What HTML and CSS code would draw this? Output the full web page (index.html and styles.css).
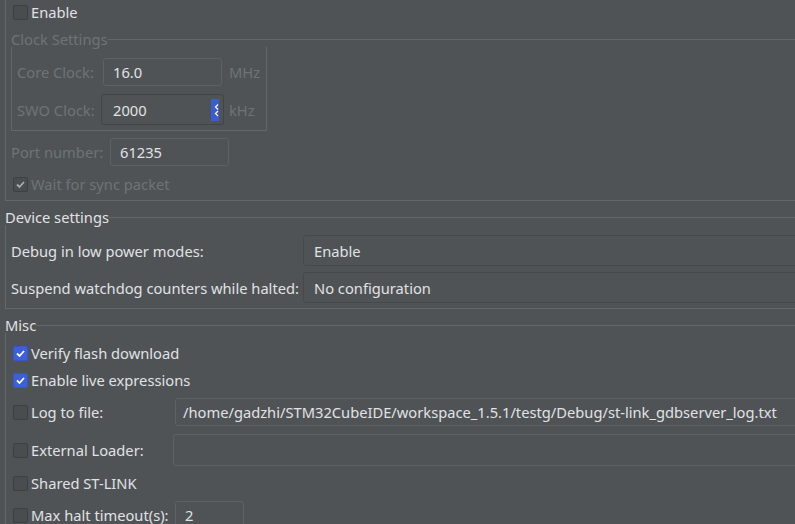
FILE: index.html
```html
<!DOCTYPE html>
<html>
<head>
  <meta charset="UTF-8">
  <link rel="stylesheet" href="styles.css">
</head>
<body>
  <div class="page">
    <div class="outer">
      <label class="check-row enable-row">
        <span class="checkbox"></span>
        <span>Enable</span>
      </label>

      <div class="group-title disabled">
        <span>Clock Settings</span>
        <span class="title-line"></span>
      </div>
      <div class="clock-box">
        <span class="disabled">Core Clock:</span>
        <div class="field">16.0</div>
        <span class="unit disabled">MHz</span>

        <span class="disabled">SWO Clock:</span>
        <div class="field spinner">
          <span>2000</span>
          <span class="spin-btn">
            <svg width="8" height="22" viewBox="0 0 8 22">
              <path d="M7 5.5 L4.5 8 L7 10.5 M7 12 L4.5 14.5 L7 17" fill="none" stroke="#fff" stroke-width="1.2"/>
            </svg>
          </span>
        </div>
        <span class="unit disabled">kHz</span>
      </div>

      <div class="port-row">
        <span class="disabled">Port number:</span>
        <div class="field port-field">61235</div>
      </div>

      <label class="check-row sync-row disabled">
        <span class="checkbox">
          <svg width="13" height="13" viewBox="0 0 13 13">
            <path d="M3 6.5 L5.5 9 L10 4" fill="none" stroke="#a7abae" stroke-width="1.8"/>
          </svg>
        </span>
        <span>Wait for sync packet</span>
      </label>
    </div>

    <div class="group-title section-title">
      <span>Device settings</span>
      <span class="title-line"></span>
    </div>
    <div class="device-box">
      <span>Debug in low power modes:</span>
      <div class="combo">Enable</div>
      <span>Suspend watchdog counters while halted:</span>
      <div class="combo">No configuration</div>
    </div>

    <div class="group-title section-title">
      <span>Misc</span>
      <span class="title-line"></span>
    </div>
    <div class="misc-box">
      <label class="check-row">
        <span class="checkbox checked">
          <svg width="13" height="13" viewBox="0 0 13 13">
            <path d="M3 6.5 L5.5 9 L10 4" fill="none" stroke="#fff" stroke-width="1.8"/>
          </svg>
        </span>
        <span>Verify flash download</span>
      </label>
      <label class="check-row misc-live">
        <span class="checkbox checked">
          <svg width="13" height="13" viewBox="0 0 13 13">
            <path d="M3 6.5 L5.5 9 L10 4" fill="none" stroke="#fff" stroke-width="1.8"/>
          </svg>
        </span>
        <span>Enable live expressions</span>
      </label>

      <div class="misc-row misc-log">
        <label class="check-row">
          <span class="checkbox"></span>
          <span>Log to file:</span>
        </label>
        <div class="field wide-field">/home/gadzhi/STM32CubeIDE/workspace_1.5.1/testg/Debug/st-link_gdbserver_log.txt</div>
      </div>

      <div class="misc-row misc-ext">
        <label class="check-row">
          <span class="checkbox"></span>
          <span>External Loader:</span>
        </label>
        <div class="field loader-field"></div>
      </div>

      <label class="check-row misc-shared">
        <span class="checkbox"></span>
        <span>Shared ST-LINK</span>
      </label>

      <div class="misc-row misc-halt">
        <label class="check-row">
          <span class="checkbox"></span>
          <span>Max halt timeout(s):</span>
        </label>
        <div class="field halt-field">2</div>
      </div>
    </div>
  </div>
</body>
</html>
```

FILE: styles.css
```css
body {
  margin: 0;
  height: 524px;
  overflow: hidden;
  background-color: #4f5356;
  font-family: "Noto Sans", sans-serif;
  font-size: 14.7px;
  color: #e0e2e4;
}

.page {
  height: 524px;
  padding-left: 5px;
  overflow: hidden;
}

.disabled {
  color: #6e7377;
}

/* outer group, continues above the window */
.outer {
  height: 201px;
  box-sizing: border-box;
  padding-left: 5px;
  border-left: 1px solid #62676b;
  border-bottom: 1px solid #62676b;
}

.check-row {
  display: flex;
  align-items: center;
  height: 24px;
  cursor: default;
}

.enable-row {
  margin-left: 2px;
}

.checkbox {
  display: flex;
  align-items: center;
  justify-content: center;
  width: 15px;
  height: 15px;
  box-sizing: border-box;
  margin-right: 3px;
  flex-shrink: 0;
  background-color: #494d50;
  border: 1px solid #3d4043;
  border-radius: 2px;
}

.checkbox.checked {
  background-color: #3d5fd8;
  border-color: #3657c9;
}

.group-title {
  display: flex;
  align-items: center;
  height: 16px;
  line-height: 16px;
  margin-top: 7px;
}

.title-line {
  flex: 1;
  height: 0;
  margin-top: 1px;
  border-top: 1px solid #62676b;
}

.clock-box {
  display: grid;
  grid-template-columns: 86px 119px auto;
  row-gap: 8px;
  align-items: center;
  width: 256px;
  box-sizing: border-box;
  padding: 11px 0 5px 5px;
  border: 1px solid #62676b;
  border-top: none;
}

.field {
  display: flex;
  align-items: center;
  height: 28px;
  box-sizing: border-box;
  padding-left: 9px;
  border: 1px solid #5d6165;
  border-radius: 3px;
  white-space: nowrap;
  overflow: hidden;
}

.spinner {
  height: 31px;
  margin: 0 -2px;
  padding-left: 11px;
  padding-right: 4px;
  justify-content: space-between;
  border-color: #414548;
}

.spin-btn {
  display: flex;
  width: 8px;
  height: 22px;
  background-color: #3b5cd9;
}

.unit {
  padding-left: 7px;
}

.port-row {
  display: grid;
  grid-template-columns: 99px 119px;
  align-items: center;
  margin-top: 7px;
}

.sync-row {
  margin-top: 6px;
  margin-left: 2px;
}

.section-title {
  margin-top: 8px;
}

.device-box {
  display: grid;
  grid-template-columns: 292px 1fr;
  row-gap: 6px;
  align-items: center;
  margin-right: -10px;
  padding: 10px 0 5px 5px;
  border-left: 1px solid #62676b;
  border-bottom: 1px solid #62676b;
}

.combo {
  display: flex;
  align-items: center;
  height: 31px;
  box-sizing: border-box;
  padding-left: 10px;
  border: 1px solid #45494c;
  border-radius: 3px;
}

.misc-box {
  display: flex;
  flex-direction: column;
  margin-right: -10px;
  padding: 8px 0 0 7px;
  border-left: 1px solid #62676b;
}

.misc-live {
  margin-top: 3px;
}

.misc-row {
  display: grid;
  grid-template-columns: 162px 1fr;
  align-items: center;
}

.misc-log {
  margin-top: 6px;
}

.misc-ext {
  margin-top: 8px;
}

.misc-shared {
  margin-top: 5px;
}

.misc-halt {
  margin-top: 6px;
}

.wide-field {
  padding-left: 7px;
}

.loader-field {
  height: 32px;
  margin-left: -2px;
}

.halt-field {
  width: 69px;
}
```
